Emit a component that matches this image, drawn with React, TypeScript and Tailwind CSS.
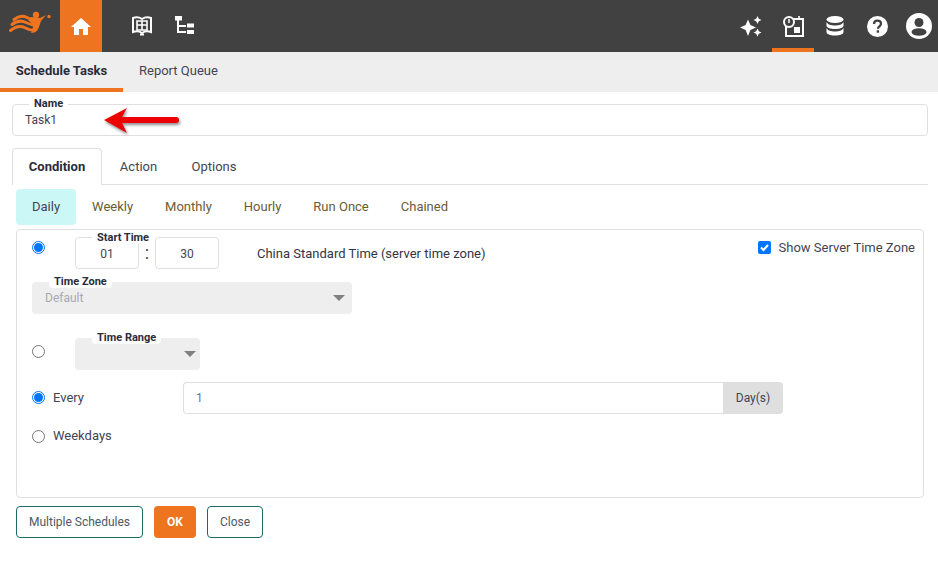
import React from "react";

const Radio = ({ on, className = "" }: { on?: boolean; className?: string }) => (
  <span className={`flex h-[13px] w-[13px] shrink-0 items-center justify-center rounded-full border bg-white ${on ? "border-[#0075ff]" : "border-[#767676]"} ${className}`}>
    {on && <span className="h-[9px] w-[9px] rounded-full bg-[#0075ff]" />}
  </span>
);

const Legend = ({ children, className }: { children: React.ReactNode; className: string }) => (
  <span className={`absolute bg-white px-[5px] text-[11px] leading-[13px] font-bold text-[#2b2b3a] ${className}`}>{children}</span>
);

const Caret = () => <span className="h-0 w-0 border-x-[6px] border-t-[6px] border-x-transparent border-t-[#808080]" />;

export default function App() {
  return (
    <div className="h-[565px] w-[938px] overflow-hidden bg-white text-[13px] text-[#444455]" style={{ fontFamily: "Roboto, sans-serif" }}>
      <header className="flex h-[52px] items-stretch bg-[#414141]">
        <div className="w-[60px]">
          <svg width="60" height="52" viewBox="0 0 60 52">
            <g fill="none" stroke="#ee7420" strokeWidth="3" strokeLinecap="round">
              <path d="M14 19.500c5-4 9-4 13-2s7 3 9 2" />
              <path d="M12 24.500c5-4 10-4 14-2s7 3 9 2" />
              <path d="M10.500 30.500c5-4 10-5 14-3s6 3 8 2.500" />
            </g>
            <path d="M31 17l9 1 6-3-5 6-2 6c-1 3-3 6-8 6 2-4 3-7 0-10l-3-3z" fill="#ee7420" />
            <circle cx="36" cy="15" r="3.200" fill="#ee7420" />
            <circle cx="49" cy="16.500" r="1.700" fill="#ee7420" />
          </svg>
        </div>
        <div className="flex w-[42px] items-center justify-center bg-[#ee7420]">
          <svg width="20" height="17" viewBox="0 0 20 17" fill="white">
            <path d="M10 0 0 9h3v8h5v-6h4v6h5V9h3z" />
          </svg>
        </div>
        <div className="ml-[29px] flex items-center">
          <svg width="22" height="20" viewBox="0 0 22 20" fill="none" stroke="white" strokeWidth="2">
            <path d="M11 3C8 1 5 1 2 2v14c3-1 6-1 9 1 3-2 6-2 9-1V2c-3-1-6-1-9 1z" />
            <path d="M6 5h10v9H6zM11 5v9M6 9h10" strokeWidth="1.600" />
            <path d="M9 18.500h4" />
          </svg>
        </div>
        <div className="ml-[22px] flex items-center">
          <svg width="20" height="20" viewBox="0 0 20 20" fill="white">
            <rect x="0" y="0" width="7" height="4.500" />
            <rect x="2" y="4" width="2" height="13" />
            <rect x="2" y="9" width="9" height="2" />
            <rect x="2" y="15" width="9" height="2" />
            <rect x="12" y="7.500" width="7" height="4" />
            <rect x="12" y="14" width="7" height="4" />
          </svg>
        </div>
        <div className="ml-auto mr-[-2px] flex items-stretch">
          <div className="flex w-[42px] items-center justify-center">
            <svg width="24" height="24" viewBox="0 0 24 24" fill="white">
              <path d="M9 5.500l2.400 5.600L17 13.500l-5.600 2.400L9 22l-2.400-6.100L1 13.500l5.600-2.400z" />
              <path d="M18.500 2l1.300 2.700 2.700 1.300-2.700 1.300-1.300 2.700-1.300-2.700L14.500 6l2.700-1.300z" />
              <path d="M18.500 14.500l1.300 2.700 2.700 1.300-2.700 1.300-1.300 2.700-1.300-2.700-2.700-1.300 2.700-1.300z" />
            </svg>
          </div>
          <div className="flex w-[42px] items-center justify-center border-b-4 border-[#ee7420] pt-1">
            <svg width="21" height="22" viewBox="0 0 21 22" fill="none" stroke="white" strokeWidth="2">
              <path d="M3 8v13h17V4H9" />
              <circle cx="6" cy="7" r="5" fill="#414141" />
              <path d="M6 4v4" strokeWidth="1.500" />
              <path d="M16 1v4" strokeWidth="1.600" />
              <rect x="11" y="12" width="6" height="6" fill="white" stroke="none" />
            </svg>
          </div>
          <div className="flex w-[42px] items-center justify-center">
            <svg width="18" height="20" viewBox="0 0 18 20" fill="white">
              <ellipse cx="9" cy="3.500" rx="8.500" ry="3.500" />
              <path d="M.5 6c1 2.500 4.500 3.500 8.500 3.500S16.500 8.500 17.500 6v3.500C17.500 11.500 14 13 9 13S.5 11.500.5 9.500z" />
              <path d="M.5 12c1 2.500 4.500 3.500 8.500 3.500s7.500-1 8.500-3.500v4C17.500 18 14 19.500 9 19.500S.5 18 .5 16z" />
            </svg>
          </div>
          <div className="flex w-[42px] items-center justify-center">
            <svg width="21" height="21" viewBox="0 0 21 21">
              <circle cx="10.500" cy="10.500" r="10.500" fill="white" />
              <path d="M7 8c0-2 1.500-3.300 3.500-3.300S14 6 14 7.800c0 2.500-3 2.700-3 5" fill="none" stroke="#414141" strokeWidth="2.200" />
              <rect x="9.700" y="14.300" width="2.400" height="2.400" fill="#414141" />
            </svg>
          </div>
          <div className="flex w-[42px] items-center justify-center">
            <svg width="26" height="26" viewBox="0 0 26 26">
              <circle cx="13" cy="13" r="13" fill="white" />
              <circle cx="13" cy="9.500" r="4.500" fill="#414141" />
              <ellipse cx="13" cy="19" rx="7.500" ry="3.800" fill="#414141" />
            </svg>
          </div>
        </div>
      </header>

      <nav className="flex h-10 bg-[#eeeeee]">
        <div className="flex w-[123px] items-center justify-center border-b-4 border-[#ee7420] pt-[2px] font-bold text-[#2b2b3a]">Schedule Tasks</div>
        <div className="flex items-center pb-[2px] pl-[16px] text-[#444455]">Report Queue</div>
      </nav>

      <div className="relative mx-3 mt-3 flex h-8 w-[916px] items-center rounded border border-[#dfdfdf] pl-3 text-[12px] text-[#444455]">
        <Legend className="left-[16px] top-[-8px]">Name</Legend>
        Task1
        <svg className="absolute left-[90px] top-[2px]" width="80" height="28" viewBox="0 0 80 28" style={{ filter: "drop-shadow(1px 2px 1.500px rgba(0,0,0,.45))" }}>
          <path d="M1 13 24 1l-5 9h54a3 3 0 0 1 0 6H19l5 10z" fill="#ee0000" />
        </svg>
      </div>

      <div className="mx-3 mt-3 flex h-[37px] w-[916px] items-stretch border-b border-[#dfdfdf]">
        <div className="mb-[-1px] flex w-[90px] items-center justify-center rounded-t border border-b-0 border-[#dfdfdf] bg-white font-bold text-[#2b2b3a]">Condition</div>
        <div className="flex w-[73px] items-center justify-center pt-[1px]">Action</div>
        <div className="flex w-[78px] items-center justify-center pt-[1px]">Options</div>
      </div>

      <div className="mx-4 mt-1 flex h-9 items-center text-[#6b5c33]">
        <div className="flex h-9 items-center justify-center rounded bg-[#ccf7f7] px-4 text-[#444455]">Daily</div>
        <div className="px-4">Weekly</div>
        <div className="px-4">Monthly</div>
        <div className="px-4">Hourly</div>
        <div className="px-4">Run Once</div>
        <div className="px-4">Chained</div>
      </div>

      <section className="mx-4 mt-1 h-[269px] w-[908px] rounded border border-[#dfdfdf] px-[15px]">
        <div className="relative flex h-[40px] items-start pt-[7px]">
          <div className="pt-[4px]"><Radio on /></div>
          <div className="relative ml-[30px] flex items-center text-[12px]">
            <Legend className="left-[17px] top-[-6px] z-10">Start Time</Legend>
            <div className="flex h-8 w-16 items-center justify-center rounded border border-[#dfdfdf] pt-[1px]">01</div>
            <div className="w-4 text-center text-[18px] leading-none">:</div>
            <div className="flex h-8 w-16 items-center justify-center rounded border border-[#dfdfdf] pt-[1px]">30</div>
          </div>
          <div className="ml-[38px] mt-[7px] text-[#333344]">China Standard Time (server time zone)</div>
          <div className="ml-auto mr-[-7px] flex items-center gap-[8px] pt-[1px] text-[#444455]">
            <span className="flex h-[13px] w-[13px] items-center justify-center rounded-[2px] bg-[#0075ff]">
              <svg width="11" height="11" viewBox="0 0 11 11" fill="none" stroke="white" strokeWidth="2"><path d="M2 5.500l2.500 2.500L9 3" /></svg>
            </span>
            Show Server Time Zone
          </div>
        </div>

        <div className="relative mt-[12px] flex h-8 w-80 items-center justify-between rounded bg-[#eeeeee] pl-[13px] pr-[7px] text-[12px] text-[#a9a9b2]">
          <Legend className="left-[17px] top-[-7px] rounded-b">Time Zone</Legend>
          Default
          <Caret />
        </div>

        <div className="mt-[24px] flex h-8 items-center">
          <Radio className="mb-[6px]" />
          <div className="relative ml-[30px] flex h-8 w-[125px] items-center justify-end rounded bg-[#eeeeee] pr-[4px]">
            <Legend className="left-[17px] top-[-7px] rounded-b">Time Range</Legend>
            <Caret />
          </div>
        </div>

        <div className="mt-[12px] flex h-8 items-center">
          <Radio on className="mb-[2px]" />
          <span className="ml-[8px] w-[130px] text-[#444455]">Every</span>
          <div className="flex h-8 w-[600px] items-stretch text-[12px]">
            <div className="flex flex-1 items-center rounded-l border border-r-0 border-[#dfdfdf] pl-[12px] text-[#5b7a99]">1</div>
            <div className="flex w-[60px] items-center justify-center rounded-r bg-[#dfdfdf]">Day(s)</div>
          </div>
        </div>

        <div className="mt-[14px] flex h-[16px] items-center">
          <Radio />
          <span className="ml-[8px]">Weekdays</span>
        </div>
      </section>

      <div className="mx-4 mt-2 flex h-8 items-stretch">
        <button className="w-[127px] rounded border border-[#1d6a66] text-[12px] text-[#4a5a66]">Multiple Schedules</button>
        <button className="ml-[11px] w-[42px] rounded bg-[#ee7420] text-[12px] font-bold text-white">OK</button>
        <button className="ml-[11px] w-14 rounded border border-[#1d6a66] text-[12px] text-[#4a5a66]">Close</button>
      </div>
    </div>
  );
}
